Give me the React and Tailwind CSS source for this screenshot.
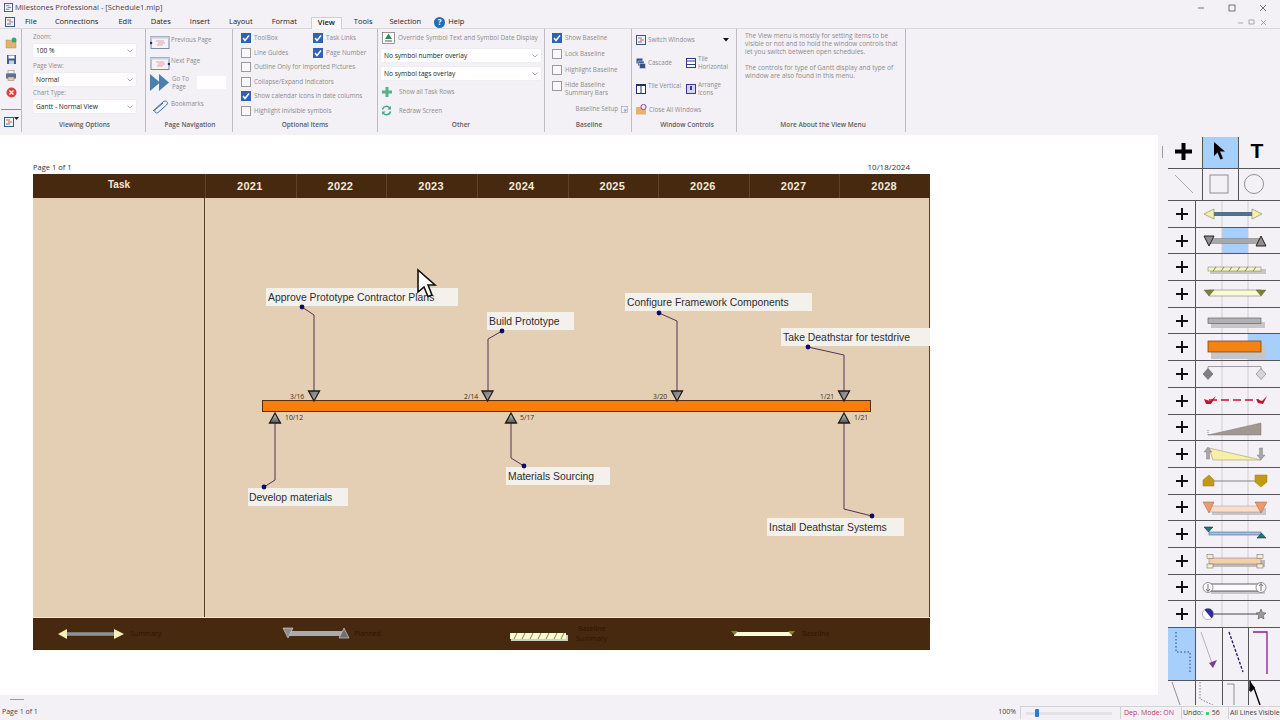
import React from "react";

const Check = ({ on }) => (
  <span className={`w-[10px] h-[10px] shrink-0 border flex items-center justify-center ${on ? "bg-[#2f62b4] border-[#2f62b4]" : "bg-[#f8f7fa] border-[#9a9a9a]"}`}>
    {on && (
      <svg width="8" height="8" viewBox="0 0 8 8"><path d="M1 4 L3 6.5 L7 1.5" fill="none" stroke="#fff" strokeWidth="1.5" /></svg>
    )}
  </span>
);

const CheckRow = ({ on, children, className = "" }) => (
  <div className={`flex items-center gap-[3px] text-[6.3px] leading-[8px] text-[#8b8b8e] ${className}`}>
    <Check on={on} />
    <span>{children}</span>
  </div>
);

const Select = ({ children, className = "" }) => (
  <div className={`bg-white rounded-[1px] flex items-center justify-between text-[6.6px] text-[#222] pl-[3px] pr-[3px] shadow-[0_0_1px_#ccc] ${className}`}>
    <span>{children}</span>
    <svg width="6" height="4" viewBox="0 0 6 4"><path d="M0.5 0.5 L3 3 L5.5 0.5" fill="none" stroke="#888" strokeWidth="0.7" /></svg>
  </div>
);

const Group = ({ title, w, children, className = "", titleClass = "pl-[2px]" }) => (
  <div className={`h-[103px] border-r border-[#bdbcc0] flex flex-col shrink-0 ${w}`}>
    <div className={`h-[89px] ${className}`}>{children}</div>
    <div className={`text-center text-[6.5px] font-semibold text-[#5c5c60] leading-[8px] mt-[3px] ${titleClass}`}>{title}</div>
  </div>
);

const Doc = ({ size = 9 }) => (
  <svg width={size} height={size} viewBox="0 0 10 10">
    <rect x="0.5" y="0.5" width="9" height="9" fill="#eef3f8" stroke="#37587f" />
    <path d="M2 3 H6 M4 5 H8" stroke="#c33" strokeWidth="0.8" />
    <path d="M2 7 H6" stroke="#37587f" strokeWidth="0.8" />
  </svg>
);

const PageIcon = ({ side }) => (
  <svg width="20" height="15" viewBox="0 0 20 15">
    <rect x="1" y="1.5" width="18" height="12" fill="#f5f2f5" stroke="#7b8ba5" />
    <rect x="1" y="1.5" width="18" height="2" fill="#c9d2e2" />
    <path d="M6 6 H14 M8 8 H15 M7 10 H13" stroke="#d58fa0" strokeWidth="0.8" />
    <circle cx={side === "l" ? 1 : 19} cy="8" r="1.3" fill="#1f2f80" />
  </svg>
);

const menus = [
  ["File", "ml-[25px]"], ["Connections", "ml-[18px]"], ["Edit", "ml-[20px]"], ["Dates", "ml-[19px]"],
  ["Insert", "ml-[19px]"], ["Layout", "ml-[19px]"], ["Format", "ml-[19px]"],
];

const years = ["2021", "2022", "2023", "2024", "2025", "2026", "2027", "2028"];

const labels = [
  ["Approve Prototype Contractor Plans", "left-[233px] top-[90px] w-[192px] pl-[2px]"],
  ["Build Prototype", "left-[454px] top-[114px] w-[87px] pl-[2px]"],
  ["Configure Framework Components", "left-[592px] top-[95px] w-[187px] pl-[2px]"],
  ["Take Deathstar for testdrive", "left-[748px] top-[130px] w-[149px] pl-[2px]"],
  ["Develop materials", "left-[215px] top-[290px] w-[100px] pl-[1px]"],
  ["Materials Sourcing", "left-[473px] top-[269px] w-[104px] pl-[2px]"],
  ["Install Deathstar Systems", "left-[734px] top-[320px] w-[137px] pl-[2px]"],
];

const dates = [
  ["3/16", "left-[257px] top-[195px]"], ["2/14", "left-[431px] top-[195px]"],
  ["3/20", "left-[620px] top-[195px]"], ["1/21", "left-[787px] top-[195px]"],
  ["10/12", "left-[252px] top-[216px]"], ["5/17", "left-[487px] top-[216px]"],
  ["1/21", "left-[821px] top-[216px]"],
];

const leaders = [
  "302,307 314,315 314,392", "502,331 488,339 488,392", "659,313 677,321 677,392",
  "808,347 844,355 844,392", "264,487 275,480 275,422", "524,466 511,458 511,422", "872,516 844,509 844,422",
];

const TriDown = ({ x, y }) => (
  <path d={`M${x - 5.5} ${y} H${x + 5.5} L${x} ${y + 10} Z`} fill="url(#tri)" stroke="#1c1c1c" strokeWidth="1.3" />
);
const TriUp = ({ x, y }) => (
  <path d={`M${x - 5.5} ${y} H${x + 5.5} L${x} ${y - 10} Z`} fill="url(#tri2)" stroke="#1c1c1c" strokeWidth="1.3" />
);

const G = ({ children }) => (
  <svg width="85" height="26" viewBox="0 0 85 26" className="block -ml-[1px] shrink-0">
    {children}
  </svg>
);
const Guides = () => <path d="M27 0 V26 M53 0 V26" stroke="#c9c8cb" strokeWidth="0.8" />;

const shapes = [
  <>
    <Guides />
    <path d="M13 13 H62" stroke="#20435f" strokeWidth="3.4" />
    <path d="M13 13 H62" stroke="#7fa6c2" strokeWidth="1" />
    <path d="M19 8 V18 L9 13 Z M57 8 V18 L67 13 Z" fill="#f5efb0" stroke="#7e8450" strokeWidth="0.6" />
  </>,
  <>
    <rect x="27" y="0" width="26" height="26" fill="#a6d0fb" />
    <Guides />
    <rect x="14" y="10.5" width="50" height="5" fill="#a8a8a8" stroke="#777" strokeWidth="0.5" />
    <path d="M9 8 H19 L14 18 Z" fill="#8d8d8d" stroke="#222" />
    <path d="M61 18 H71 L66 8 Z" fill="#8d8d8d" stroke="#222" />
  </>,
  <>
    <Guides />
    <rect x="15" y="15" width="56" height="5" fill="#c6c5c8" />
    <rect x="13" y="13" width="53" height="4" fill="#f6f5c4" stroke="#777" strokeWidth="0.5" />
    <path d="M18 17 L21 13 M26 17 L29 13 M34 17 L37 13 M42 17 L45 13 M50 17 L53 13 M58 17 L61 13" stroke="#7c8c2c" strokeWidth="1" />
  </>,
  <>
    <Guides />
    <rect x="14" y="9" width="52" height="6" fill="#fbfbd2" stroke="#666" strokeWidth="0.5" />
    <path d="M9 9 H19 L14 15 Z M61 9 H71 L66 15 Z" fill="#7c8427" stroke="#555" strokeWidth="0.4" />
  </>,
  <>
    <Guides />
    <rect x="16" y="14" width="54" height="6" fill="#c6c5c8" />
    <rect x="13" y="10" width="53" height="5.5" fill="#b1b1b3" stroke="#555" strokeWidth="0.6" />
  </>,
  <>
    <rect x="53" y="0" width="32" height="26" fill="#a6d0fb" />
    <Guides />
    <rect x="16" y="11" width="54" height="14" fill="#c6c5c8" />
    <rect x="13" y="7" width="53" height="11" fill="#f58312" stroke="#6c3a10" strokeWidth="0.7" />
  </>,
  <>
    <Guides />
    <path d="M13 13 V5.5 H66 V13" fill="none" stroke="#666" strokeWidth="0.6" />
    <path d="M13 7.5 L18 13 L13 18.5 L8 13 Z" fill="#7f7f7f" stroke="#555" strokeWidth="0.5" />
    <path d="M66 7.5 L71 13 L66 18.5 L61 13 Z" fill="#d5d5d5" stroke="#666" strokeWidth="0.5" />
  </>,
  <>
    <Guides />
    <path d="M14 12 H64" stroke="#c3132e" strokeWidth="1.4" strokeDasharray="8 4" />
    <path d="M9 11 L15 13 L21 8 L16 16 L11 16 Z M61 11 L67 13 L72 8 L68 16 L63 15 Z" fill="#c3132e" />
  </>,
  <>
    <Guides />
    <path d="M13 20 L66 8 V20 Z" fill="#a39791" stroke="#666" strokeWidth="0.4" />
    <path d="M13 15 V20" stroke="#444" strokeWidth="0.6" strokeDasharray="1 1" />
  </>,
  <>
    <Guides />
    <path d="M14 8 L66 20 H18 Z" fill="#f8eeaa" stroke="#8c8c5a" strokeWidth="0.5" transform="translate(0,-1)" />
    <path d="M13 6 L9 11 H11.5 V18 H14.5 V11 H17 Z" fill="#a6a6a8" stroke="#777" strokeWidth="0.4" />
    <path d="M66 19 L62 14 H64.5 V7 H67.5 V14 H70 Z" fill="#a6a6a8" stroke="#777" strokeWidth="0.4" />
  </>,
  <>
    <Guides />
    <path d="M14 13 H66" stroke="#777" strokeWidth="0.9" />
    <path d="M8 12 L14 7 L19 12 V18 H8 Z M60 7 H72 V14 L66 19 L60 14 Z" fill="#c49a12" stroke="#8c7a2a" strokeWidth="0.5" />
  </>,
  <>
    <Guides />
    <rect x="17" y="13" width="54" height="7" fill="#c6c5c8" />
    <rect x="14" y="11" width="52" height="6" fill="#fbdcc8" stroke="#888" strokeWidth="0.4" />
    <path d="M8 7 H19 L14 18 Z M60 7 H72 L66 18 Z" fill="#f09a6c" stroke="#8b6a50" strokeWidth="0.5" />
  </>,
  <>
    <Guides />
    <rect x="14" y="11" width="52" height="3" fill="#9cc0e8" stroke="#4a6588" strokeWidth="0.6" />
    <path d="M9 6 H18 L13.5 11 Z" fill="#167a76" stroke="#123" strokeWidth="0.5" />
    <path d="M62 17 H71 L66.5 12 Z" fill="#167a76" stroke="#123" strokeWidth="0.5" />
  </>,
  <>
    <Guides />
    <rect x="15" y="12" width="55" height="7" fill="#bcbcbc" />
    <rect x="14" y="10" width="52" height="6" fill="#f6cfa8" stroke="#777" strokeWidth="0.5" />
    <rect x="12" y="6.5" width="6" height="4" fill="#f5eed2" stroke="#666" strokeWidth="0.5" />
    <rect x="12" y="16" width="6" height="4" fill="#f5eed2" stroke="#666" strokeWidth="0.5" />
    <rect x="62" y="6.5" width="6" height="4" fill="#f5eed2" stroke="#666" strokeWidth="0.5" />
    <rect x="62" y="16" width="6" height="4" fill="#f5eed2" stroke="#666" strokeWidth="0.5" />
  </>,
  <>
    <Guides />
    <rect x="16" y="12" width="54" height="7" fill="#c6c5c8" />
    <rect x="13" y="9" width="53" height="7" fill="#fbfafc" stroke="#222" strokeWidth="0.7" />
    <circle cx="13" cy="12.5" r="5" fill="#f8f8f8" stroke="#555" strokeWidth="0.6" />
    <circle cx="66" cy="12.5" r="5" fill="#f8f8f8" stroke="#555" strokeWidth="0.6" />
    <path d="M13 9 V16 M11 14 L13 16.5 L15 14 M66 16 V9 M64 11 L66 8.5 L68 11" fill="none" stroke="#555" strokeWidth="0.8" />
  </>,
  <>
    <Guides />
    <path d="M14 13 H66" stroke="#333" strokeWidth="0.9" />
    <circle cx="13" cy="13" r="5.5" fill="#fff" stroke="#777" strokeWidth="0.5" />
    <path d="M13 13 V7.5 A5.5 5.5 0 0 1 13 18.5 Z" fill="#332a92" transform="rotate(-40 13 13)" />
    <path d="M66 8 L67.5 11.5 L71 12 L68.3 14.5 L69 18 L66 16.3 L63 18 L63.7 14.5 L61 12 L64.5 11.5 Z" fill="#9a9a9a" stroke="#444" strokeWidth="0.5" />
  </>,
];

export default function App() {
  return (
    <div className="w-[1280px] h-[720px] overflow-hidden flex flex-col bg-[#f3f1f5] font-['Open_Sans',sans-serif] text-[#333]">
      {/* title bar */}
      <div className="h-[15px] flex items-center pl-[4px] shrink-0">
        <Doc size={9} />
        <span className="ml-[2px] text-[7.6px] text-[#444]">Milestones Professional - [Schedule1.mlp]</span>
        <div className="ml-auto flex items-center text-[#555]">
          <svg width="90" height="12" viewBox="0 0 90 12" className="mr-[1px]">
            <path d="M9 6 H15" stroke="#555" strokeWidth="0.8" />
            <rect x="40" y="3" width="6" height="6" fill="none" stroke="#555" strokeWidth="0.8" />
            <path d="M71 3 L77 9 M77 3 L71 9" stroke="#555" strokeWidth="0.8" />
          </svg>
        </div>
      </div>
      {/* menu bar */}
      <div className="h-[14px] pt-[1px] flex items-center shrink-0 text-[7.5px] text-[#222] relative border-b border-[#d8d7da]">
        <span className="absolute left-[5px] top-[2px]"><Doc size={10} /></span>
        {menus.map(([m, c]) => (
          <span key={m} className={c}>{m}</span>
        ))}
        <span className="ml-[14px] w-[31px] h-[12px] mt-[1px] font-semibold bg-[#f8f7fa] border border-b-0 border-[#cfced2] text-[#222] flex items-center justify-center">View</span>
        <span className="ml-[12px]">Tools</span>
        <span className="ml-[17px]">Selection</span>
        <span className="ml-[13px] flex items-center gap-[3px]">
          <span className="w-[11px] h-[11px] rounded-full bg-[#1f6fb4] text-white text-[8px] font-bold flex items-center justify-center">?</span>
          Help
        </span>
        <svg width="36" height="8" viewBox="0 0 36 8" className="absolute right-[8px] top-[3px]">
          <path d="M2 5 H7 M13 2 H18 V6 H13 Z M25 2 L30 7 M30 2 L25 7" fill="none" stroke="#8a8a8a" strokeWidth="0.7" />
        </svg>
      </div>
      {/* ribbon */}
      <div className="h-[106px] flex items-start shrink-0 bg-[#f3f1f5]">
        <div className="w-[22px] h-[103px] border-r border-[#bdbcc0] flex flex-col items-center pt-[8px] pl-[1px] shrink-0">
          <svg width="12" height="12" viewBox="0 0 12 12">
            <path d="M1 3 H5 L6 4 H11 V11 H1 Z" fill="#e3b26e" stroke="#a87f44" strokeWidth="0.4" />
            <circle cx="9" cy="3" r="2.5" fill="#35a86b" />
          </svg>
          <svg width="11" height="11" viewBox="0 0 11 11" className="mt-[5px]">
            <rect x="1" y="1" width="9" height="9" fill="#3b5f94" />
            <rect x="2.5" y="1.5" width="6" height="3" fill="#fff" />
            <rect x="3" y="6.5" width="5" height="3.5" fill="#c6d1e2" />
          </svg>
          <svg width="12" height="11" viewBox="0 0 12 11" className="mt-[5px]">
            <rect x="3" y="0.5" width="6" height="3" fill="#f5f5f5" stroke="#777" strokeWidth="0.5" />
            <rect x="1" y="3.5" width="10" height="5" fill="#5a7192" />
            <rect x="3" y="7" width="6" height="3.5" fill="#f0c7b5" stroke="#777" strokeWidth="0.5" />
          </svg>
          <svg width="11" height="11" viewBox="0 0 11 11" className="mt-[6px]">
            <circle cx="5.5" cy="5.5" r="5" fill="#d4423a" />
            <path d="M3.5 3.5 L7.5 7.5 M7.5 3.5 L3.5 7.5" stroke="#fff" strokeWidth="1.3" />
          </svg>
          <div className="w-[20px] h-[1px] bg-[#8f8f93] mt-[11px] mb-[7px]" />
          <div className="flex items-start"><Doc size={10} /><svg width="5" height="4" viewBox="0 0 5 4"><path d="M0 0 H5 L2.5 3 Z" fill="#222" /></svg></div>
        </div>

        <Group title="Viewing Options" w="w-[124px]" className="px-[11px] pt-[4px]">
          <div className="text-[6.2px] leading-[8px] text-[#8b8b8e]">Zoom:</div>
          <Select className="h-[13px] mt-[3px] w-[103px]">100 %</Select>
          <div className="text-[6.2px] leading-[8px] text-[#8b8b8e] mt-[5px]">Page View:</div>
          <Select className="h-[13px] mt-[3px] w-[103px]">Normal</Select>
          <div className="text-[6.2px] leading-[8px] text-[#8b8b8e] mt-[3px]">Chart Type:</div>
          <Select className="h-[13px] mt-[3px] w-[103px]">Gantt - Normal View</Select>
        </Group>

        <Group title="Page Navigation" w="w-[87px]" className="pl-[4px] pt-[6px] text-[6.2px] leading-[8px] text-[#8b8b8e]">
          <div className="flex items-start gap-[1px]"><PageIcon side="l" /><span className="mt-[1px]">Previous Page</span></div>
          <div className="flex items-start gap-[1px] mt-[6px]"><PageIcon side="r" /><span className="mt-[1px]">Next Page</span></div>
          <div className="flex items-center mt-[3px]">
            <svg width="20" height="17" viewBox="0 0 20 17"><path d="M0 0 L10 8.5 L0 17 Z M9 0 L19 8.5 L9 17 Z" fill="#4a7fb0" /></svg>
            <span className="w-[25px] ml-[2px]">Go To Page</span>
            <span className="w-[29px] h-[13px] bg-white" />
          </div>
          <div className="flex items-center gap-[1px] mt-[7px]">
            <svg width="20" height="16" viewBox="0 0 20 16"><path d="M3 13 L13 4 C16 1.5 19 4.5 16.5 7 L8 14.5 C6 16 3.5 13.5 5.5 11.5 L13 5" fill="none" stroke="#3b6ba5" strokeWidth="1" /></svg>
            <span className="mb-[4px]">Bookmarks</span>
          </div>
        </Group>

        <Group title="Optional Items" w="w-[145px]" className="pl-[8px] pt-[4px] flex flex-col gap-[4.6px]" titleClass="">
          <div className="flex">
            <CheckRow on className="w-[72px]">ToolBox</CheckRow>
            <CheckRow on>Task Links</CheckRow>
          </div>
          <div className="flex">
            <CheckRow className="w-[72px]">Line Guides</CheckRow>
            <CheckRow on>Page Number</CheckRow>
          </div>
          <CheckRow>Outline Only for Imported Pictures</CheckRow>
          <CheckRow>Collapse/Expand Indicators</CheckRow>
          <CheckRow on>Show calendar icons in date columns</CheckRow>
          <CheckRow>Highlight invisible symbols</CheckRow>
        </Group>

        <Group title="Other" w="w-[167px]" className="pl-[3px] pt-[3px] text-[6.2px] leading-[8px] text-[#8b8b8e]" titleClass="">
          <div className="flex items-center gap-[3px] h-[12px] pl-[1px]">
            <svg width="13" height="12" viewBox="0 0 13 12"><rect x="0.5" y="0.5" width="12" height="11" fill="#fff" stroke="#555" strokeWidth="0.6" /><path d="M6.5 1.5 L10 7 H3 Z" fill="#2e8a4e" /><path d="M3 9 H10" stroke="#555" strokeWidth="1" /></svg>
            <span className="text-[6.4px]">Override Symbol Text and Symbol Date Display</span>
          </div>
          <Select className="h-[13px] w-[160px] mt-[5px]">No symbol number overlay</Select>
          <Select className="h-[13px] w-[160px] mt-[5px]">No symbol tags overlay</Select>
          <div className="flex items-center mt-[6px] h-[11px] pl-[1px]">
            <svg width="10" height="10" viewBox="0 0 10 10"><path d="M3.5 0 H6.5 V3.5 H10 V6.5 H6.5 V10 H3.5 V6.5 H0 V3.5 H3.5 Z" fill="#57b08c" /></svg>
            <span className="ml-[7px]">Show all Task Rows</span>
          </div>
          <div className="flex items-center mt-[8px] h-[11px]">
            <svg width="11" height="11" viewBox="0 0 11 11"><path d="M1.5 4.5 A4 4 0 0 1 9 3.5 M9.5 6.5 A4 4 0 0 1 2 7.5" fill="none" stroke="#3aa87a" strokeWidth="1.4" /><path d="M9.8 1 V4.5 H6.5 Z M1.2 10 V6.5 H4.5 Z" fill="#3aa87a" /></svg>
            <span className="ml-[7px]">Redraw Screen</span>
          </div>
        </Group>

        <Group title="Baseline" w="w-[87px]" className="pl-[7px] pt-[4px]">
          <CheckRow on>Show Baseline</CheckRow>
          <CheckRow className="mt-[6px]">Lock Baseline</CheckRow>
          <CheckRow className="mt-[6px]">Highlight Baseline</CheckRow>
          <CheckRow className="mt-[6px]"><span className="block w-[50px] -mb-[6px]">Hide Baseline Summary Bars</span></CheckRow>
          <div className="flex items-center justify-end gap-[3px] mt-[14px] pr-[3px] text-[6.2px] leading-[8px] text-[#8b8b8e]">
            Baseline Setup
            <svg width="7" height="7" viewBox="0 0 7 7"><rect x="0.5" y="0.5" width="6" height="6" fill="none" stroke="#999" strokeWidth="0.6" /><path d="M3 3 L5 5 M5 3 V5 H3" fill="none" stroke="#4a7fb0" strokeWidth="0.6" /></svg>
          </div>
        </Group>

        <Group title="Window Controls" w="w-[105px]" className="px-[4px] pt-[5px] text-[6.2px] leading-[8px] text-[#8b8b8e]" titleClass="pl-[6px]">
          <div className="flex items-center gap-[2px] h-[12px]">
            <Doc size={10} />
            <span>Switch Windows</span>
            <svg width="6" height="4" viewBox="0 0 6 4" className="ml-auto mr-[3px]"><path d="M0 0 H6 L3 3.5 Z" fill="#111" /></svg>
          </div>
          <div className="flex mt-[9px] items-center h-[16px]">
            <div className="flex items-center gap-[2px] w-[50px]">
              <svg width="10" height="11" viewBox="0 0 10 11"><rect x="0.5" y="0.5" width="6" height="5" fill="#36508f" /><rect x="2" y="3" width="6" height="5" fill="#445fa0" stroke="#fff" strokeWidth="0.4" /><rect x="3.5" y="5.5" width="6" height="5" fill="#36508f" stroke="#fff" strokeWidth="0.4" /></svg>
              <span>Cascade</span>
            </div>
            <div className="flex items-center gap-[2px]">
              <svg width="10" height="10" viewBox="0 0 10 10"><rect x="0.5" y="0.5" width="9" height="9" fill="#fff" stroke="#2f3d85" strokeWidth="1" /><path d="M0 3 H10 M0 6.5 H10" stroke="#2f3d85" strokeWidth="1" /></svg>
              <span className="w-[30px]">Tile Horizontal</span>
            </div>
          </div>
          <div className="flex mt-[10px] items-center h-[16px]">
            <div className="flex items-center gap-[2px] w-[50px]">
              <svg width="10" height="10" viewBox="0 0 10 10"><rect x="0.5" y="0.5" width="9" height="9" fill="#fff" stroke="#222d70" strokeWidth="1" /><path d="M5 0 V10" stroke="#222d70" /><path d="M0 1.5 H10" stroke="#222d70" /></svg>
              <span className="mb-[7px] whitespace-nowrap">Tile Vertical</span>
            </div>
            <div className="flex items-center gap-[2px]">
              <svg width="10" height="10" viewBox="0 0 10 10"><rect x="0.5" y="0.5" width="9" height="9" fill="#d6d3ee" stroke="#3b3a92" /><rect x="4" y="2" width="2" height="4" fill="#3b3a92" /></svg>
              <span className="w-[30px]">Arrange Icons</span>
            </div>
          </div>
          <div className="flex items-center gap-[2px] mt-[7px]">
            <svg width="11" height="11" viewBox="0 0 11 11"><path d="M0 3 H4 L5 4 H10 V10.5 H0 Z" fill="#e3b26e" /><circle cx="7.5" cy="3" r="2.6" fill="#f0e8f5" stroke="#9d3c8e" /></svg>
            <span>Close All Windows</span>
          </div>
        </Group>

        <Group title="More About the View Menu" w="w-[169px]" className="pl-[8px] pr-[5px] pt-[3px] text-[6.5px] leading-[8px] text-[#8b8b8e]" titleClass="pl-[4px]">
          <p>The View menu is mostly for setting items to be visible or not and to hold the window controls that let you switch between open schedules.</p>
          <p className="mt-[8px]">The controls for type of Gantt display and type of window are also found in this menu.</p>
        </Group>
      </div>

      {/* main */}
      <div className="h-[570px] flex shrink-0">
        <div className="w-[1168px] shrink-0">
          <div className="flex h-[560px]">
            <div className="w-[1158px] bg-white pl-[33px] pt-[27px] shrink-0">
              <div className="w-[877px] flex justify-between text-[7.5px] leading-[10px] text-[#333]">
                <span>Page 1 of 1</span>
                <span className="text-[8px]">10/18/2024</span>
              </div>
              <div className="w-[897px] h-[476px] mt-[2px] flex flex-col font-['Liberation_Sans',sans-serif]">
                <div className="h-[24px] bg-[#47290f] flex text-[#f4ead8] font-bold">
                  <div className="w-[172px] text-center text-[10px] leading-[22px]">Task</div>
                  <div className="flex-1 grid grid-cols-8 items-stretch">
                    {years.map((y) => (
                      <div key={y} className="border-l border-[#5f4428] text-center text-[11px] tracking-[0.3px] leading-[24px] pr-[2px]">{y}</div>
                    ))}
                  </div>
                </div>
                <div className="h-[419px] bg-[#e5cfb4] relative border-r border-[#5e4125] flex">
                  <div className="w-[172px] h-full border-r border-[#5e4125]" />
                  {labels.map(([t, c]) => (
                    <div key={t} className={`absolute h-[18px] bg-[#f4f1ed] text-[10.4px] leading-[19px] text-[#2c2c2c] whitespace-nowrap ${c}`}>{t}</div>
                  ))}
                  {dates.map(([t, c]) => (
                    <div key={t + c} className={`absolute font-['Open_Sans',sans-serif] text-[6.8px] leading-[8px] text-[#3c2a18] ${c}`}>{t}</div>
                  ))}
                  <svg width="897" height="419" viewBox="33 198 897 419" className="absolute left-0 top-0">
                    <defs>
                      <linearGradient id="tri" x1="0" y1="0" x2="1" y2="1">
                        <stop offset="0" stopColor="#6f6f6f" /><stop offset="1" stopColor="#b9b9b9" />
                      </linearGradient>
                      <linearGradient id="tri2" x1="0" y1="0" x2="0" y2="1">
                        <stop offset="0" stopColor="#cfcfcf" /><stop offset="1" stopColor="#555" />
                      </linearGradient>
                    </defs>
                    <rect x="262.5" y="400.5" width="608" height="11" fill="#f47f0e" stroke="#5a2d0a" strokeWidth="1" />
                    {leaders.map((p) => (
                      <polyline key={p} points={p} fill="none" stroke="#4d3358" strokeWidth="1" />
                    ))}
                    {[[302, 307], [502, 331], [659, 313], [808, 347], [264, 487], [524, 466], [872, 516]].map(([x, y]) => (
                      <circle key={x} cx={x} cy={y} r="2.4" fill="#0b0b6b" />
                    ))}
                    <TriDown x={314} y={391} />
                    <TriDown x={487.5} y={391} />
                    <TriDown x={677} y={391} />
                    <TriDown x={844} y={391} />
                    <TriUp x={275} y={423} />
                    <TriUp x={511} y={423} />
                    <TriUp x={844} y={423} />
                    <path d="M418 270 L418 292 L424 287 L428 296.5 L432 295 L428 285 L435 285 Z" fill="#fff" stroke="#111" strokeWidth="1.6" />
                  </svg>
                </div>
                <div className="h-[33px] bg-[#47290f] flex items-center font-['Open_Sans',sans-serif] text-[7px] text-[#2a1505] border-t border-[#f3e6d2]">
                  <div className="flex items-center ml-[24px] w-[224px]">
                    <svg width="68" height="12" viewBox="0 0 68 12">
                      <path d="M8 6 H60" stroke="#b9c6cf" strokeWidth="3" /><path d="M8 6 H60" stroke="#2f4d63" strokeWidth="0.8" />
                      <path d="M10 1 V11 L1 6 Z M57 1 V11 L67 6 Z" fill="#f6f0b4" />
                    </svg>
                    <span className="ml-[5px]">Summary</span>
                  </div>
                  <div className="flex items-center w-[228px]">
                    <svg width="70" height="14" viewBox="0 0 70 14">
                      <rect x="8" y="4" width="54" height="5" fill="#aaa" />
                      <path d="M2 1 H12 L7 11 Z" fill="#8d8d8d" stroke="#ddd" strokeWidth="0.6" />
                      <path d="M58 11 H68 L63 1 Z" fill="#6f6f6f" stroke="#ddd" strokeWidth="0.6" />
                    </svg>
                    <span className="ml-[3px]">Planned</span>
                  </div>
                  <div className="flex items-center w-[222px]">
                    <svg width="60" height="10" viewBox="0 0 60 10" className="mt-[6px]">
                      <rect x="2" y="3" width="57" height="6" fill="#cfcfc9" />
                      <rect x="1" y="1" width="56" height="6" fill="#fbfbd6" />
                      <path d="M5 7 L8 1 M13 7 L16 1 M21 7 L24 1 M29 7 L32 1 M37 7 L40 1 M45 7 L48 1 M52 7 L55 1" stroke="#7c8c2c" strokeWidth="1" />
                    </svg>
                    <span className="ml-[7px] leading-[10px] text-center">Baseline<br />Summary</span>
                  </div>
                  <div className="flex items-center">
                    <svg width="64" height="8" viewBox="0 0 64 8">
                      <rect x="3" y="2" width="58" height="4" fill="#fbfbd6" />
                      <path d="M0 1 H7 L3.5 5 Z M57 1 H64 L60.5 5 Z" fill="#7c8427" />
                    </svg>
                    <span className="ml-[7px]">Baseline</span>
                  </div>
                </div>
              </div>
            </div>
            <div className="flex-1 pt-[11px] pl-[4px]"><div className="w-[1px] h-[12px] bg-[#9a9a9a]" /></div>
          </div>
          <div className="h-[10px] pl-[10px] pt-[4px]"><div className="w-[14px] h-[1px] bg-[#999]" /></div>
        </div>

        {/* toolbox */}
        <div className="w-[112px] shrink-0 pt-[2px] overflow-hidden">
          <div className="h-[32px] flex border-b border-[#555]">
            <div className="w-[35px] border-r border-[#555] flex items-center justify-center pr-[3px] pb-[3px]">
              <svg width="17" height="17" viewBox="0 0 17 17"><path d="M6.5 0 H10.5 V6.5 H17 V10.5 H10.5 V17 H6.5 V10.5 H0 V6.5 H6.5 Z" fill="#000" /></svg>
            </div>
            <div className="w-[36px] border-r border-[#555] bg-[#a6d0fb] flex items-center justify-center pb-[3px] pr-[3px]">
              <svg width="12" height="18" viewBox="0 0 12 18"><path d="M1 0 V14 L4.5 10.5 L7.5 17.5 L10 16.5 L7 9.5 L12 9.5 Z" fill="#000" /></svg>
            </div>
            <div className="flex-1 flex items-center justify-center pr-[5px] pb-[3px] font-['Liberation_Sans',sans-serif] font-bold text-[21px] text-black">T</div>
          </div>
          <div className="h-[32px] flex border-b border-[#555]">
            <div className="w-[35px] border-r border-[#555] flex items-center justify-center pr-[3px] pb-[1px]">
              <svg width="20" height="20" viewBox="0 0 20 20"><path d="M1 1 L19 19" stroke="#8a8a8a" strokeWidth="0.7" /></svg>
            </div>
            <div className="w-[36px] border-r border-[#555] flex items-center justify-center pb-[1px] pr-[3px]">
              <svg width="20" height="20" viewBox="0 0 20 20"><rect x="1" y="1" width="18" height="18" fill="none" stroke="#777" strokeWidth="0.8" /></svg>
            </div>
            <div className="flex-1 flex items-center justify-center pr-[11px] pb-[1px]">
              <svg width="22" height="22" viewBox="0 0 22 22"><circle cx="11" cy="11" r="9.5" fill="none" stroke="#777" strokeWidth="0.8" /></svg>
            </div>
          </div>
          {shapes.map((s, i) => (
            <div key={i} className="h-[26.7px] flex border-b border-[#555] overflow-hidden">
              <div className="w-[28px] shrink-0 border-r border-[#555] flex items-center justify-center">
                <svg width="12" height="12" viewBox="0 0 12 12"><path d="M5 0 H7 V5 H12 V7 H7 V12 H5 V7 H0 V5 H5 Z" fill="#111" /></svg>
              </div>
              <G>{s}</G>
            </div>
          ))}
          <div className="h-[53px] flex border-b border-[#555]">
            <div className="w-[28px] shrink-0 border-r border-[#555] bg-[#a6d0fb] flex justify-center pt-[2px]">
              <svg width="20" height="48" viewBox="0 0 20 48"><path d="M4 2 V22 H18 V44" fill="none" stroke="#16307a" strokeWidth="0.9" strokeDasharray="1.5 2" /></svg>
            </div>
            <div className="w-[27px] shrink-0 border-r border-[#555] flex justify-center pt-[2px]">
              <svg width="20" height="48" viewBox="0 0 20 48"><path d="M2 2 L14 36" stroke="#a78ac0" strokeWidth="0.7" /><path d="M10 33 L18 30 L14 38 Z" fill="#7c3aa0" /></svg>
            </div>
            <div className="w-[26px] shrink-0 border-r border-[#555] flex justify-center pt-[2px]">
              <svg width="20" height="48" viewBox="0 0 20 48"><path d="M3 2 L17 42" stroke="#1b1b6b" strokeWidth="1.3" strokeDasharray="3 1.5" /></svg>
            </div>
            <div className="flex-1 pt-[2px] pl-[2px]">
              <svg width="20" height="48" viewBox="0 0 20 48"><path d="M2 2 H16 V44" fill="none" stroke="#8a1c8c" strokeWidth="1.3" /></svg>
            </div>
          </div>
          <div className="h-[26px] flex">
            <div className="w-[28px] shrink-0 border-r border-[#555]">
              <svg width="25" height="26" viewBox="0 0 25 26"><path d="M4 1 L12 24" stroke="#666" strokeWidth="0.7" /></svg>
            </div>
            <div className="w-[27px] shrink-0 border-r border-[#555]">
              <svg width="25" height="26" viewBox="0 0 25 26"><path d="M4 1 V18 L17 24" fill="none" stroke="#555" strokeWidth="0.7" strokeDasharray="1.5 1.5" /></svg>
            </div>
            <div className="w-[26px] shrink-0 border-r border-[#555]">
              <svg width="24" height="26" viewBox="0 0 24 26"><path d="M4 3 H11 V26" fill="none" stroke="#666" strokeWidth="0.7" /></svg>
            </div>
            <div className="flex-1">
              <svg width="30" height="26" viewBox="0 0 30 26"><path d="M1 0 L2 10 L5 7 L11 24" fill="none" stroke="#000" strokeWidth="1.4" /><path d="M1 0 L0 10 L6 7 Z" fill="#000" /></svg>
            </div>
          </div>
        </div>
      </div>

      {/* status bar */}
      <div className="h-[15px] flex items-center shrink-0 text-[7px] text-[#444] relative">
        <span className="ml-[2px]">Page 1 of 1</span>
        <span className="ml-auto mr-[4px]">100%</span>
        <div className="w-[100px] h-[13px] border-l border-t border-[#d3d2d6] flex items-center pl-[5px] pr-[8px] relative">
          <div className="w-full h-[3px] bg-[#e2e1e4]" />
          <div className="absolute left-[14px] w-[4px] h-[8px] rounded-[1px] bg-[#2c7ac9]" />
        </div>
        <span className="w-[61px] h-[13px] border-l border-t border-[#d3d2d6] text-[#c2365a] flex items-center pl-[3px] whitespace-nowrap">Dep. Mode: ON</span>
        <span className="w-[47px] h-[13px] border-l border-t border-[#d3d2d6] flex items-center pl-[1px] gap-[3px] whitespace-nowrap">Undo: <span className="w-[3px] h-[3px] bg-[#4fd06a]" /> 56</span>
        <span className="w-[52px] h-[13px] border-l border-t border-[#d3d2d6] flex items-center pl-[1px] whitespace-nowrap">All Lines Visible</span>
      </div>
    </div>
  );
}
